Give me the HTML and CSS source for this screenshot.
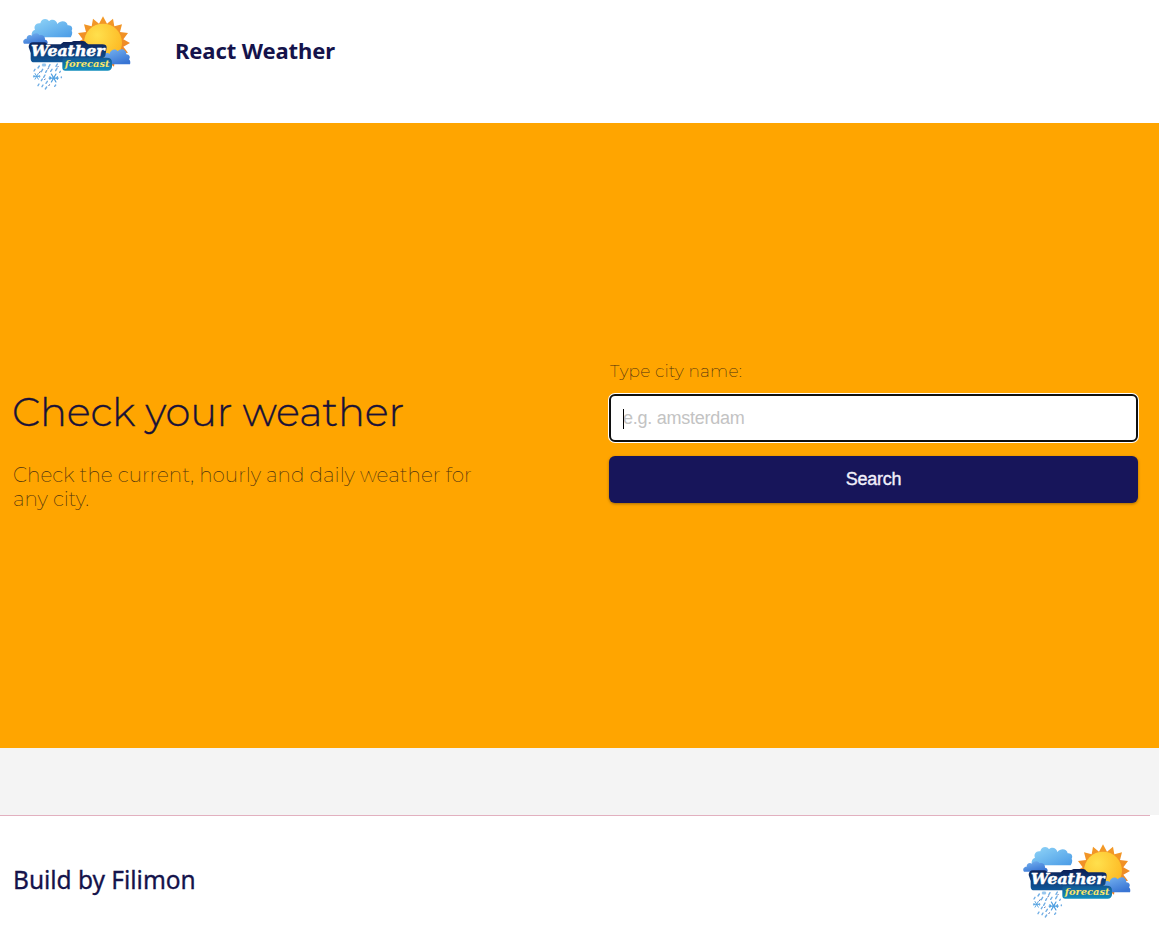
FILE: index.html
```html
<!DOCTYPE html>
<html lang="en">
<head>
<meta charset="utf-8">
<title>React Weather</title>
<link rel="stylesheet" href="styles.css">
</head>
<body>
<svg class="defs" width="0" height="0" aria-hidden="true">
  <defs>
    <linearGradient id="cloud" x1="0" y1="0" x2="1" y2="1"><stop offset="0" stop-color="#92d6f8"/><stop offset="1" stop-color="#4a9be6"/></linearGradient>
    <linearGradient id="cloudDark" x1="0" y1="0" x2="0.6" y2="1"><stop offset="0" stop-color="#78b5f1"/><stop offset="1" stop-color="#3975d4"/></linearGradient>
    <linearGradient id="rays" x1="0" y1="0" x2="0" y2="1"><stop offset="0" stop-color="#f39a26"/><stop offset="1" stop-color="#ec8025"/></linearGradient>
    <radialGradient id="disc" cx="0.35" cy="0.3" r="0.8"><stop offset="0" stop-color="#ffe04d"/><stop offset="1" stop-color="#fdb51f"/></radialGradient>
    <linearGradient id="plate" x1="0" y1="0" x2="0" y2="1"><stop offset="0" stop-color="#0c1f55"/><stop offset="1" stop-color="#10589a"/></linearGradient>
    <linearGradient id="plateLight" x1="0" y1="0" x2="0" y2="1"><stop offset="0" stop-color="#115894"/><stop offset="1" stop-color="#138fbd"/></linearGradient>
    <g id="flake" fill="none" stroke="#4e9fe0" stroke-width="3" stroke-linecap="round">
      <path d="M-11 0H11M-5.5-9.5L5.5 9.5M5.5-9.5L-5.5 9.5M-9-3l2 3-2 3M9-3l-2 3 2 3"/>
    </g>
    <symbol id="logo" viewBox="0 0 375 270">
      <path fill="url(#rays)" d="M264 25l12 22 18-15 4 23 23-6-6 23 24 3-14 19 20 11-20 11 14 18-23 3 6 22-22-6-3 23-18-14-15 20-15-20-18 14-3-23-22 6 6-22-23-3 14-18-20-11 20-11-14-19 24-3-6-23 23 6 4-23 18 15z"/>
      <circle cx="264" cy="104" r="57" fill="url(#disc)"/>
      <path fill="url(#cloud)" d="M52 88c-5-12 0-20 8-23-5-11 4-22 16-19 2-14 20-17 26-6 9-9 23-4 25 8 10-13 29-10 31 4 11-2 17 8 12 16 4 7 0 15-3 20z"/>
      <path fill="url(#cloudDark)" d="M27 107c-6-8 1-16 8-15-1-9 9-14 16-9 6-9 18-9 22-1 10-3 18 4 17 13 6 0 9 5 8 12z"/>
      <path fill="url(#cloudDark)" d="M268 169v-30c4-6 13-5 16-1 1-13 18-18 24-8 9-12 27-6 26 9 10 0 13 10 8 15 4 4 5 10 3 15z"/>
      <path fill="url(#plate)" d="M55 103h34q6 0 8 6h40l8-7h24l7-3h28q8 0 10 6l6 4h42q13 0 13 10l-4 24q-2 7-10 8h-17q-3 12-12 12H58q-11 0-11-11v-17l-6-18q0-14 14-14z"/>
      <path fill="url(#plateLight)" d="M150 149h125q17 0 16 16v12q-2 11-13 11H151q-9 0-9-9v-20q0-10 8-10z"/>
      <text class="logo-title" x="48" y="145" textLength="221" lengthAdjust="spacingAndGlyphs">Weather</text>
      <text class="logo-subtitle" x="149" y="176" textLength="135" lengthAdjust="spacingAndGlyphs">forecast</text>
      <use href="#flake" transform="translate(65 205) scale(.9)"/>
      <use href="#flake" transform="translate(116 210) scale(1.25)"/>
      <use href="#flake" transform="translate(87 171) scale(.5)"/>
      <g stroke="#70aee5" stroke-width="4.2" stroke-linecap="round">
        <path d="M73 174l-4 6M60 184l-3 5M83 184l-4 7M105 170l-4 7M127 168l-4 7M111 184l-4 6M126 181l-4 7M95 188l-3 5M90 201l-4 7M82 213l-3 5M97 220l-4 6M72 228l-3 5M84 231l-3 5M95 237l-4 6M122 231l-3 4M136 190l-2 3M139 207v2"/>
      </g>
      <path d="M101 179l-3 5M76 190l-3 5M91 212l-3 4M104 229l-3 5M130 174l-2 4" stroke="#344f9b" stroke-width="2.4"/>
    </symbol>
  </defs>
</svg>

<header class="header">
  <svg class="logo" role="img" aria-label="Weather forecast"><use href="#logo"/></svg>
  <span class="brand">React Weather</span>
</header>

<main class="hero">
  <section class="intro">
    <h1 class="intro-title">Check your weather</h1>
    <p class="intro-text"><span class="intro-line">Check the current, hourly and daily weather for</span> any city.</p>
  </section>
  <form class="search">
    <label class="search-label" for="city">Type city name:</label>
    <div class="field">
      <input class="search-input" id="city" type="text" placeholder="e.g. amsterdam">
      <span class="caret"></span>
    </div>
    <button class="search-button" type="button">Search</button>
  </form>
</main>

<div class="spacer"></div>

<footer class="footer">
  <div class="rule"></div>
  <div class="footer-row">
    <span class="credit">Build by Filimon</span>
    <svg class="logo" role="img" aria-label="Weather forecast"><use href="#logo"/></svg>
  </div>
</footer>
</body>
</html>
```

FILE: styles.css
```css
* { box-sizing: border-box; }
body {
  margin: 0;
  height: 939px;
  overflow: hidden;
  background: #fff;
  color: #17155a;
  font-family: "Open Sans", "Noto Sans", sans-serif;
}
.defs { display: block; height: 0; }
.logo { display: block; width: 125px; height: 90px; flex: none; }
.logo-title {
  font: italic bold 47px "DejaVu Serif", serif;
  fill: #fff;
  stroke: #fff;
  stroke-width: 1.5px;
}
.logo-subtitle {
  font: italic bold 29px "DejaVu Serif", serif;
  fill: #f8e66b;
}
.header {
  display: flex;
  height: 123px;
  padding: 8px 15px;
  gap: 35px;
}
.brand {
  margin-top: 26px;
  font: 700 22px/32px "Noto Sans", sans-serif;
  letter-spacing: -0.1px;
  color: #15134b;
}
.hero {
  display: grid;
  grid-template-columns: 596px 529px;
  align-items: start;
  height: 625px;
  padding: 0 13px;
  background: #ffa500;
}
.intro { padding-top: 264px; }
.intro-title {
  margin: 0 0 0 -1px;
  font: 300 40px/50px "Montserrat", "Inter", sans-serif;
  letter-spacing: -0.2px;
  color: #1a1238;
  -webkit-text-stroke: 0.3px #1a1238;
}
.intro-text {
  width: 480px;
  margin: 26px 0 0;
  font: 200 20px/24px "Montserrat", "Inter", sans-serif;
  color: #4a3010;
}
.intro-line { white-space: nowrap; }
.search { padding-top: 236px; }
.search-label {
  display: block;
  height: 35px;
  padding-left: 1px;
  font: 200 17px/24px "Montserrat", "Inter", sans-serif;
  letter-spacing: 0.2px;
  color: #4a3010;
}
.field { position: relative; }
.search-input {
  display: block;
  width: 529px;
  height: 48px;
  padding: 0 12px;
  border: 2px solid #101010;
  border-radius: 6px;
  outline: 0;
  background: #fff;
  box-shadow: 0 0 0 1px #fff;
  font: 18px "Liberation Sans", Arial, sans-serif;
  letter-spacing: -0.25px;
}
.search-input::placeholder { color: #c3c3c3; opacity: 1; }
.caret {
  position: absolute;
  left: 14px;
  top: 15px;
  width: 1px;
  height: 20px;
  background: #000;
}
.search-button {
  display: block;
  width: 529px;
  height: 47px;
  margin-top: 14px;
  padding: 0;
  border: 0;
  border-radius: 6px;
  background: #17155a;
  box-shadow: 0 1px 3px rgba(0, 0, 0, 0.35);
  color: #f0effa;
  font: 18px "Liberation Sans", Arial, sans-serif;
  letter-spacing: -0.25px;
  -webkit-text-stroke: 0.35px #f0effa;
}
.spacer { height: 67px; background: #f4f4f4; }
.rule { width: 1150px; height: 1px; background: #e2b0bf; }
.footer-row {
  display: flex;
  justify-content: space-between;
  padding: 20px 19px 0 13px;
}
.credit {
  margin-top: 28px;
  font: 400 24.5px/32px "Noto Sans", sans-serif;
  letter-spacing: -0.03px;
  color: #15134b;
  -webkit-text-stroke: 0.3px #15134b;
}
```
